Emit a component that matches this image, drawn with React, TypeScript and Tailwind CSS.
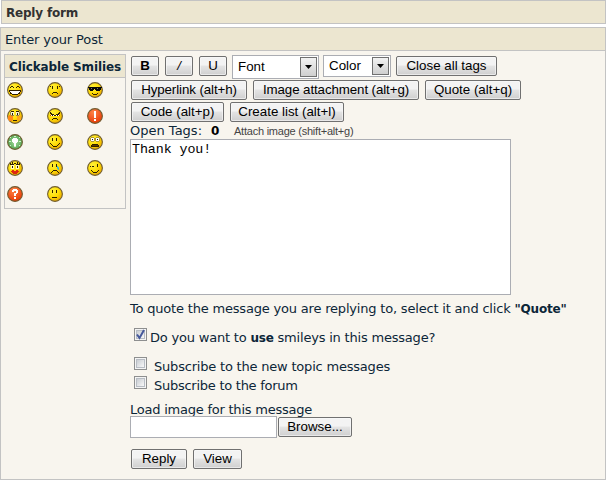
import React from "react";

const verdana = "font-['DejaVu_Sans',Verdana,sans-serif]";
const arial = "font-['Liberation_Sans',Arial,sans-serif]";

// Facial details are drawn on a 16 x 16 pixel grid.
const K = "#302000";
const faces: Record<string, { fill?: string; art: React.ReactNode }> = {
  grin: {
    art: (
      <>
        <path d="M3 5h1v1H3zM4 4h2v1H4zM6 5h1v1H6zM9 5h1v1H9zM10 4h2v1h-2zM12 5h1v1h-1z" fill={K} />
        <path d="M2 8h12v2h-1v2h-2v1H5v-1H3v-2H2z" fill={K} />
        <path d="M3 9h10v1H3zM4 10h8v1H4zM5 11h6v1H5z" fill="#fff" />
      </>
    ),
  },
  sad: { art: <path d="M5 4h1v3H5zM10 4h1v3h-1zM3 4h1v1H3zM12 4h1v1h-1zM5 11h1v1H5zM6 10h4v1H6zM10 11h1v1h-1z" fill={K} /> },
  cool: {
    art: (
      <>
        <path d="M1 5h14v1h-1v2h-1v1H9V8H8V7H7v1H6v1H3V8H2V6H1z" fill="#080808" />
        <path d="M4 6h1v1H4zM10 6h1v1h-1z" fill="#777" />
        <path d="M5 11h1v1H5zM6 12h4v1H6zM10 11h1v1h-1z" fill={K} />
      </>
    ),
  },
  blush: {
    art: (
      <>
        <ellipse cx="3.5" cy="10" rx="2.8" ry="2.8" fill="#ff8c18" />
        <ellipse cx="12" cy="10" rx="2.5" ry="2.5" fill="#ffa818" />
        <path d="M4 4h3v4H4zM9 4h3v4H9z" fill="#f8f4d0" />
        <path d="M4 3h3v1H4zM9 3h3v1H9zM5 5h1v2H5zM10 5h1v2h-1zM6 12h4v1H6z" fill={K} />
        <path d="M3 4h1v3H3zM12 4h1v3h-1zM4 7h3v1H4zM9 7h3v1H9z" fill="#938348" />
      </>
    ),
  },
  evil: {
    art: (
      <>
        <path d="M4 5h1v1h2v2H4zM12 5h-1v1H9v2h3z" fill="#fff" />
        <path d="M3 4h1v1h1v1h2v1H6v1H5V7H4V6H3zM13 4h-1v1h-1v1H9v1h1v1h1V7h1V6h1zM7 7h2v1H7zM5 11h1v-1h4v1h1v1h-1v-1H6v1H5z" fill={K} />
        <path d="M3 7h1v1H3zM12 7h1v1h-1z" fill="#d44000" />
      </>
    ),
  },
  exclaim: { fill: "url(#red)", art: <path d="M7 3h2v7H7zM7 11h2v2H7z" fill="#fff" /> },
  idea: {
    fill: "url(#green)",
    art: (
      <>
        <path d="M6 4h4v1h1v3h-1v1H9v3H7V9H6V8H5V5h1z" fill="#fff" />
        <path d="M7 12h2v1H7zM3 3h1v1H3zM12 3h1v1h-1zM2 7h2v1H2zM12 7h2v1h-2zM3 11h1v1H3zM12 11h1v1h-1zM7 2h2v1H7z" fill="#d3f0cb" />
      </>
    ),
  },
  smile: { art: <path d="M5 4h1v3H5zM9 4h1v3H9zM3 9h1v1h1v1h1v1h4v-1h1v-1h1V9h1v1h-1v1h-1v1h-1v1H6v-1H5v-1H4v-1H3z" fill={K} /> },
  shock: {
    art: (
      <>
        <path d="M4 4h3v3H4zM9 4h3v3H9z" fill="#fff" />
        <path d="M4 3h3v1H4zM9 3h3v1H9zM3 4h1v3H3zM7 4h1v3H7zM8 4h1v3H8zM12 4h1v3h-1zM4 7h3v1H4zM9 7h3v1H9z" fill="#b09a38" />
        <path d="M5 5h1v1H5zM10 5h1v1h-1zM4 11h1v-1h6v1h1v2H4z" fill={K} />
        <path d="M5 11h6v1H5z" fill="#5c3a00" />
      </>
    ),
  },
  kiss: {
    art: (
      <>
        <path d="M4 5h3v4H4zM9 5h3v4H9z" fill="#fff8c0" />
        <path d="M3 3h1v1H3zM5 2h1v2H5zM7 3h1v1H7zM8 3h1v1H8zM10 2h1v2h-1zM12 3h1v1h-1zM3 4h4v1H3zM9 4h4v1H9zM5 6h1v2H5zM10 6h1v2h-1z" fill={K} />
        <path d="M5 10h2v1h2v-1h2v1h1v1h-1v1h-1v1H6v-1H5v-1H4v-1h1z" fill="#df2910" />
      </>
    ),
  },
  cry: {
    art: (
      <>
        <path d="M5 4h1v3H5zM9 4h1v3H9zM4 12h1v-1h1v-1h4v1h1v1h1v1h-1v-1h-1v-1H6v1H5v1H4z" fill={K} />
        <path d="M10 6h1v1h1v3h-1V9h-1z" fill="#45bac7" />
      </>
    ),
  },
  wink: { art: <path d="M3 6h1v1H3zM4 7h1V6h2v1H4zM10 4h1v3h-1zM4 10h1v1h1v1h4v-1h1v-1h1v1h-1v1h-1v1H6v-1H5v-1H4z" fill={K} /> },
  question: { fill: "url(#red)", art: <path d="M5 4h1V3h4v1h1v3h-1v1H9v2H7V7h2V5H7v1H5zM7 11h2v2H7z" fill="#fff" /> },
  neutral: { art: <path d="M5 4h1v3H5zM9 4h1v3H9zM5 11h5v1H5z" fill={K} /> },
};

const order = ["grin", "sad", "cool", "blush", "evil", "exclaim", "idea", "smile", "shock", "kiss", "cry", "wink", "question", "neutral"];

function Smiley({ name }: { name: string }) {
  const face = faces[name];
  return (
    <svg viewBox="0 0 16 16" className="block h-4 w-4">
      <defs>
        <radialGradient id="yellow" cx=".35" cy=".3" r=".75"><stop stopColor="#fff13b" /><stop offset=".55" stopColor="#ffdd05" /><stop offset="1" stopColor="#e9a500" /></radialGradient>
        <radialGradient id="red" cx=".4" cy=".25" r=".8"><stop stopColor="#ff8549" /><stop offset="1" stopColor="#e63500" /></radialGradient>
        <radialGradient id="green"><stop stopColor="#a8dda0" /><stop offset="1" stopColor="#57a653" /></radialGradient>
      </defs>
      <circle cx="8" cy="8" r="7.4" fill={face.fill ?? "url(#yellow)"} stroke="#705d32" strokeWidth="1.1" />
      <g shapeRendering="crispEdges">{face.art}</g>
    </svg>
  );
}

function Button({ className, children }: { className: string; children: React.ReactNode }) {
  return (
    <button className={`flex h-5 shrink-0 items-center justify-center rounded-[2px] border border-[#707070] bg-linear-to-b from-[#f3f3f3] from-45% via-[#e4e4e4] via-50% to-[#cfcfcf] text-[13.33px] whitespace-nowrap text-black shadow-[inset_0_0_0_1px_#fafafa99] ${arial} ${className}`}>
      {children}
    </button>
  );
}

function Select({ className, children }: { className: string; children: React.ReactNode }) {
  return (
    <div className={`flex shrink-0 items-center justify-between border border-[#abadb3] bg-white p-px pl-[5px] text-[13.33px] text-black ${arial} ${className}`}>
      <span>{children}</span>
      <span className="flex h-full w-[17px] items-center justify-center border border-[#707070] bg-linear-to-b from-[#f2f2f2] to-[#cfcfcf]">
        <svg viewBox="0 0 7 4" className="h-1 w-[7px]"><path d="M0 0h7L3.5 4z" fill="#000" /></svg>
      </span>
    </div>
  );
}

function Checkbox({ checked = false }: { checked?: boolean }) {
  return (
    <span className="flex h-[13px] w-[13px] shrink-0 items-center justify-center border border-[#8e8f8f] bg-[#f4f4f4]">
      <span className="h-[9px] w-[9px] border border-[#b8bdc4] bg-linear-to-br from-[#c9cdd2] to-[#f8f8f8]">
        {checked && <svg viewBox="0 0 9 9" className="-mt-px -ml-px h-[9px] w-[9px] overflow-visible"><path d="M1 4.5 3.5 8 8 0" stroke="#45589b" strokeWidth="2" fill="none" /></svg>}
      </span>
    </span>
  );
}

export default function App() {
  return (
    <div className={`h-[480px] w-[606px] overflow-hidden bg-white text-[13px] leading-4 text-[#0c2638] ${verdana}`}>
      <div className="ml-px flex h-6 items-center border border-[#c3c3c3] bg-[#ece6d0] pl-1 text-xs font-bold text-[#323232]">
        <span className="pt-px tracking-[-0.2px]">Reply form</span>
      </div>
      <div className="mt-[3px] h-[453px] border border-[#c3c3c3] bg-[#f8f5ee]">
        <div className="flex h-[23px] items-center border-b border-[#c3c3c3] bg-[#ece6d0] pl-1">
          <span className="pt-px tracking-[-0.12px]">Enter your Post</span>
        </div>
        <div className="flex items-start pl-[3px]">
          <section className="mt-[3px] h-[155px] w-[122px] shrink-0 border border-[#c3c3c3]">
            <h2 className="flex h-[23px] items-center border-b border-[#c3c3c3] bg-[#ece6d0] pt-px pl-1 text-xs font-bold tracking-[-0.12px] whitespace-nowrap">Clickable Smilies</h2>
            <div className="grid grid-cols-[16px_16px_16px] gap-x-6 gap-y-2.5 pt-1 pl-0.5">
              {order.map((name) => <Smiley key={name} name={name} />)}
            </div>
          </section>
          <main className="ml-1 flex w-[470px] flex-col items-start pt-1">
            <div className="flex h-6">
              <div className="ml-px flex gap-1.5 pt-px">
                <Button className="w-7 font-bold">B</Button>
                <Button className="w-7 italic">/</Button>
                <Button className="w-7">U</Button>
              </div>
              <Select className="ml-[5px] h-6 w-[87px]">Font</Select>
              <Select className="ml-1 h-[22px] w-[68px]">Color</Select>
              <Button className="mt-px ml-[5px] w-[101px]">Close all tags</Button>
            </div>
            <div className="mt-px ml-px flex gap-1.5">
              <Button className="w-[116px] tracking-[-0.1px]">Hyperlink (alt+h)</Button>
              <Button className="w-[166px] tracking-[-0.1px]">Image attachment (alt+g)</Button>
              <Button className="w-24">Quote (alt+q)</Button>
            </div>
            <div className="mt-0.5 ml-px flex gap-1.5">
              <Button className="w-[93px]">Code (alt+p)</Button>
              <Button className="w-[114px]">Create list (alt+l)</Button>
            </div>
            <div className="flex h-[17px] items-center whitespace-nowrap">
              <span className="w-[81px]">Open Tags:</span>
              <b className="w-[23px] text-xs text-black">0</b>
              <span className={`pt-px text-[11px] tracking-[-0.23px] text-[#444] ${arial}`}>Attach image (shift+alt+g)</span>
            </div>
            <textarea className="block h-[156px] w-[381px] resize-none border border-[#abadb3] bg-white px-px py-0.5 font-['Liberation_Mono','Courier_New',monospace] text-[13.33px] leading-4 tracking-[-0.08px] text-black" defaultValue="Thank you!" />
            <p className="mt-1.5 tracking-[-0.19px] whitespace-nowrap">To quote the message you are replying to, select it and click <b className="text-xs">"Quote"</b></p>
            <label className="mt-[11px] ml-1 flex h-[17px] gap-[3px] tracking-[-0.2px] whitespace-nowrap">
              <Checkbox checked /><span className="pt-0.5">Do you want to <b className="text-xs">use</b> smileys in this message?</span>
            </label>
            <label className="mt-3 ml-1 flex h-[19px] gap-[7px] tracking-[-0.2px] whitespace-nowrap"><Checkbox /><span className="pt-0.5">Subscribe to the new topic messages</span></label>
            <label className="ml-1 flex h-[19px] gap-[7px] tracking-[-0.26px] whitespace-nowrap"><Checkbox /><span className="pt-0.5">Subscribe to the forum</span></label>
            <div className="mt-[7px] h-[14px] tracking-[-0.23px] whitespace-nowrap">Load image for this message</div>
            <div className="flex h-[22px] items-center gap-px">
              <input className="h-[22px] w-[147px] border border-[#abadb3] bg-white" />
              <Button className="w-[74px]">Browse...</Button>
            </div>
            <div className="mt-[11px] ml-px flex gap-1.5">
              <Button className="w-14">Reply</Button>
              <Button className="w-[49px]">View</Button>
            </div>
          </main>
        </div>
      </div>
    </div>
  );
}
